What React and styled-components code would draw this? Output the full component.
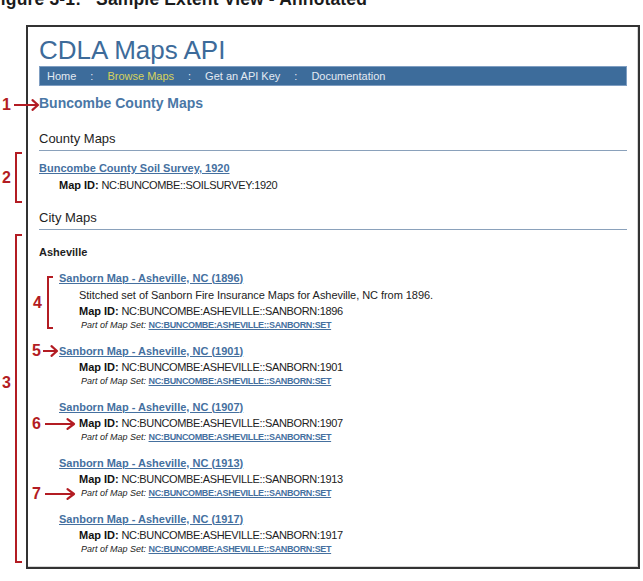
import React from "react";
import styled, { createGlobalStyle } from "styled-components";

const RED = "#b31c23";
const BLUE = "#45709f";

const Global = createGlobalStyle`
  html, body { margin: 0; padding: 0; background: #fff; }
  body { font-family: "Liberation Sans", Arial, sans-serif; }
`;

const Page = styled.div`
  position: relative;
  width: 643px;
  height: 581px;
  overflow: hidden;
  background: #fff;
`;

const Caption = styled.div`
  margin: -11px 0 0 -10px;
  height: 20px;
  font: bold 17.5px/20px "Liberation Sans", Arial, sans-serif;
  letter-spacing: 0.15px;
  color: #1b1b1b;
  white-space: nowrap;
`;

const CaptionGap = styled.span`
  margin-left: 15px;
`;

const Frame = styled.div`
  box-sizing: border-box;
  margin: 16px 0 0 26px;
  width: 614px;
  height: 544px;
  border: 2px solid #333;
  box-shadow: inset -1px -1px 0 #d6d6d6;
  padding: 8px 11px 0 11px;
  display: flex;
  flex-direction: column;
  font: 11px/16px "Liberation Sans", Arial, sans-serif;
  color: #222;
`;

const Title = styled.h1`
  margin: 0;
  font: normal 26px/31px "Liberation Sans", Arial, sans-serif;
  color: #3d6b9a;
`;

const Nav = styled.nav`
  display: flex;
  align-items: center;
  gap: 14px;
  box-sizing: border-box;
  height: 20px;
  padding-left: 7px;
  background: #3d6c9b;
  border: 1px solid #7f9ec2;
  font: 11px/14px "Liberation Sans", Arial, sans-serif;
`;

const NavItem = styled.span`
  color: ${(p) => (p.$active ? "#d6d25c" : "#e3eaf2")};
`;

const NavSep = styled.span`
  color: #e3eaf2;
`;

const CountyTitle = styled.h2`
  margin: 9px 0 0;
  font: bold 14px/16px "Liberation Sans", Arial, sans-serif;
  color: #4a77a6;
`;

const Section = styled.section`
  display: flex;
  flex-direction: column;
  margin-top: ${(p) => p.$mt}px;
`;

const SectionTitle = styled.h3`
  margin: 0;
  padding-bottom: 3px;
  border-bottom: 1px solid #8aa1bb;
  font: normal 13px/16px "Liberation Sans", Arial, sans-serif;
  color: #1e1e1e;
`;

const CityName = styled.h4`
  margin: 14px 0 0;
  font: bold 11px/16px "Liberation Sans", Arial, sans-serif;
  color: #1e1e1e;
`;

const EntryList = styled.div`
  display: flex;
  flex-direction: column;
  gap: 10.5px;
  margin: ${(p) => p.$mt}px 0 0 ${(p) => p.$indent}px;
`;

const Entry = styled.div`
  display: flex;
  flex-direction: column;
`;

const LinkLine = styled.div`
  line-height: 16px;
`;

const MapLink = styled.a`
  font-weight: bold;
  font-size: 11px;
  color: ${BLUE};
  text-decoration: underline;
`;

const Details = styled.div`
  display: flex;
  flex-direction: column;
  padding-left: 20px;
`;

const Desc = styled.div`
  margin-top: 1px;
  line-height: 16px;
  letter-spacing: -0.05px;
  color: #222;
`;

const MapId = styled.div`
  margin-top: 0.5px;
  line-height: 16px;
  color: #222;
  letter-spacing: -0.35px;
`;

const Label = styled.b`
  color: #111;
  letter-spacing: 0;
`;

const PartOf = styled.div`
  padding-left: 2px;
  font: italic 9px/13px "Liberation Sans", Arial, sans-serif;
  color: #222;
`;

const SetLink = styled.a`
  font-style: normal;
  font-weight: bold;
  letter-spacing: -0.35px;
  color: ${BLUE};
  text-decoration: underline;
`;

/* Annotation callouts laid over the figure */
const Overlay = styled.div`
  position: absolute;
  inset: 0;
  pointer-events: none;
`;

const Callout = styled.div`
  position: absolute;
  left: ${(p) => p.$x}px;
  top: ${(p) => p.$y}px;
  display: flex;
  align-items: ${(p) => p.$align || "center"};
  gap: ${(p) => p.$gap}px;
`;

const Num = styled.span`
  margin-top: ${(p) => p.$drop || 0}px;
  font: bold 16px/16px "Liberation Sans", Arial, sans-serif;
  color: ${RED};
`;

const Bracket = styled.div`
  box-sizing: border-box;
  width: ${(p) => p.$w}px;
  height: ${(p) => p.$h}px;
  border: 2px solid ${RED};
  border-right: none;
`;

const Arrow = ({ len, head = 5 }) => (
  <svg width={len} height={12} viewBox={`0 0 ${len} 12`} style={{ overflow: "visible" }}>
    <line x1="0" y1="6" x2={len - 2} y2="6" stroke={RED} strokeWidth="2" />
    <polyline
      points={`${len - head - 1.5},1.2 ${len - 1},6 ${len - head - 1.5},10.8`}
      fill="none"
      stroke={RED}
      strokeWidth="2.2"
      strokeLinecap="round"
      strokeLinejoin="round"
    />
  </svg>
);

const SET = "NC:BUNCOMBE:ASHEVILLE::SANBORN:SET";

const cityMaps = [
  {
    year: 1896,
    desc: "Stitched set of Sanborn Fire Insurance Maps for Asheville, NC from 1896.",
  },
  { year: 1901 },
  { year: 1907 },
  { year: 1913 },
  { year: 1917 },
];

const navItems = [
  { label: "Home" },
  { label: "Browse Maps", active: true },
  { label: "Get an API Key" },
  { label: "Documentation" },
];

const arrowCallouts = [
  { n: 1, x: 2, cy: 104.5, gap: 3, len: 25, head: 5 },
  { n: 5, x: 32, cy: 351, gap: 2, len: 15, head: 5 },
  { n: 6, x: 32, cy: 423.5, gap: 4, len: 30, head: 6 },
  { n: 7, x: 32, cy: 493.5, gap: 4, len: 30, head: 6 },
];

const bracketCallouts = [
  { n: 2, x: 2, top: 152, h: 51, w: 7, gap: 4 },
  { n: 3, x: 2, top: 234, h: 329, w: 7, gap: 4, drop: 140.5 },
  { n: 4, x: 33, top: 276, h: 53, w: 6, gap: 5 },
];

export default function App() {
  return (
    <Page>
      <Global />
      <Caption>
        Figure 3-1:<CaptionGap>Sample Extent View - Annotated</CaptionGap>
      </Caption>
      <Frame>
        <Title>CDLA Maps API</Title>
        <Nav>
          {navItems.map((n, i) => (
            <React.Fragment key={n.label}>
              {i > 0 && <NavSep>:</NavSep>}
              <NavItem $active={n.active}>{n.label}</NavItem>
            </React.Fragment>
          ))}
        </Nav>
        <CountyTitle>Buncombe County Maps</CountyTitle>

        <Section $mt={20}>
          <SectionTitle>County Maps</SectionTitle>
          <EntryList $mt={9} $indent={0}>
            <Entry>
              <LinkLine>
                <MapLink href="#">Buncombe County Soil Survey, 1920</MapLink>
              </LinkLine>
              <Details>
                <MapId>
                  <Label>Map ID:</Label> NC:BUNCOMBE::SOILSURVEY:1920
                </MapId>
              </Details>
            </Entry>
          </EntryList>
        </Section>

        <Section $mt={17}>
          <SectionTitle>City Maps</SectionTitle>
          <CityName>Asheville</CityName>
          <EntryList $mt={10} $indent={20}>
            {cityMaps.map((m) => (
              <Entry key={m.year}>
                <LinkLine>
                  <MapLink href="#">Sanborn Map - Asheville, NC ({m.year})</MapLink>
                </LinkLine>
                <Details>
                  {m.desc && <Desc>{m.desc}</Desc>}
                  <MapId>
                    <Label>Map ID:</Label> NC:BUNCOMBE:ASHEVILLE::SANBORN:{m.year}
                  </MapId>
                  <PartOf>
                    Part of Map Set: <SetLink href="#">{SET}</SetLink>
                  </PartOf>
                </Details>
              </Entry>
            ))}
          </EntryList>
        </Section>
      </Frame>

      <Overlay>
        {arrowCallouts.map((a) => (
          <Callout key={a.n} $x={a.x} $y={a.cy - 8} $gap={a.gap}>
            <Num>{a.n}</Num>
            <Arrow len={a.len} head={a.head} />
          </Callout>
        ))}
        {bracketCallouts.map((b) => (
          <Callout
            key={b.n}
            $x={b.x}
            $y={b.top}
            $gap={b.gap}
            $align={b.drop ? "flex-start" : "center"}
          >
            <Num $drop={b.drop}>{b.n}</Num>
            <Bracket $w={b.w} $h={b.h} />
          </Callout>
        ))}
      </Overlay>
    </Page>
  );
}
